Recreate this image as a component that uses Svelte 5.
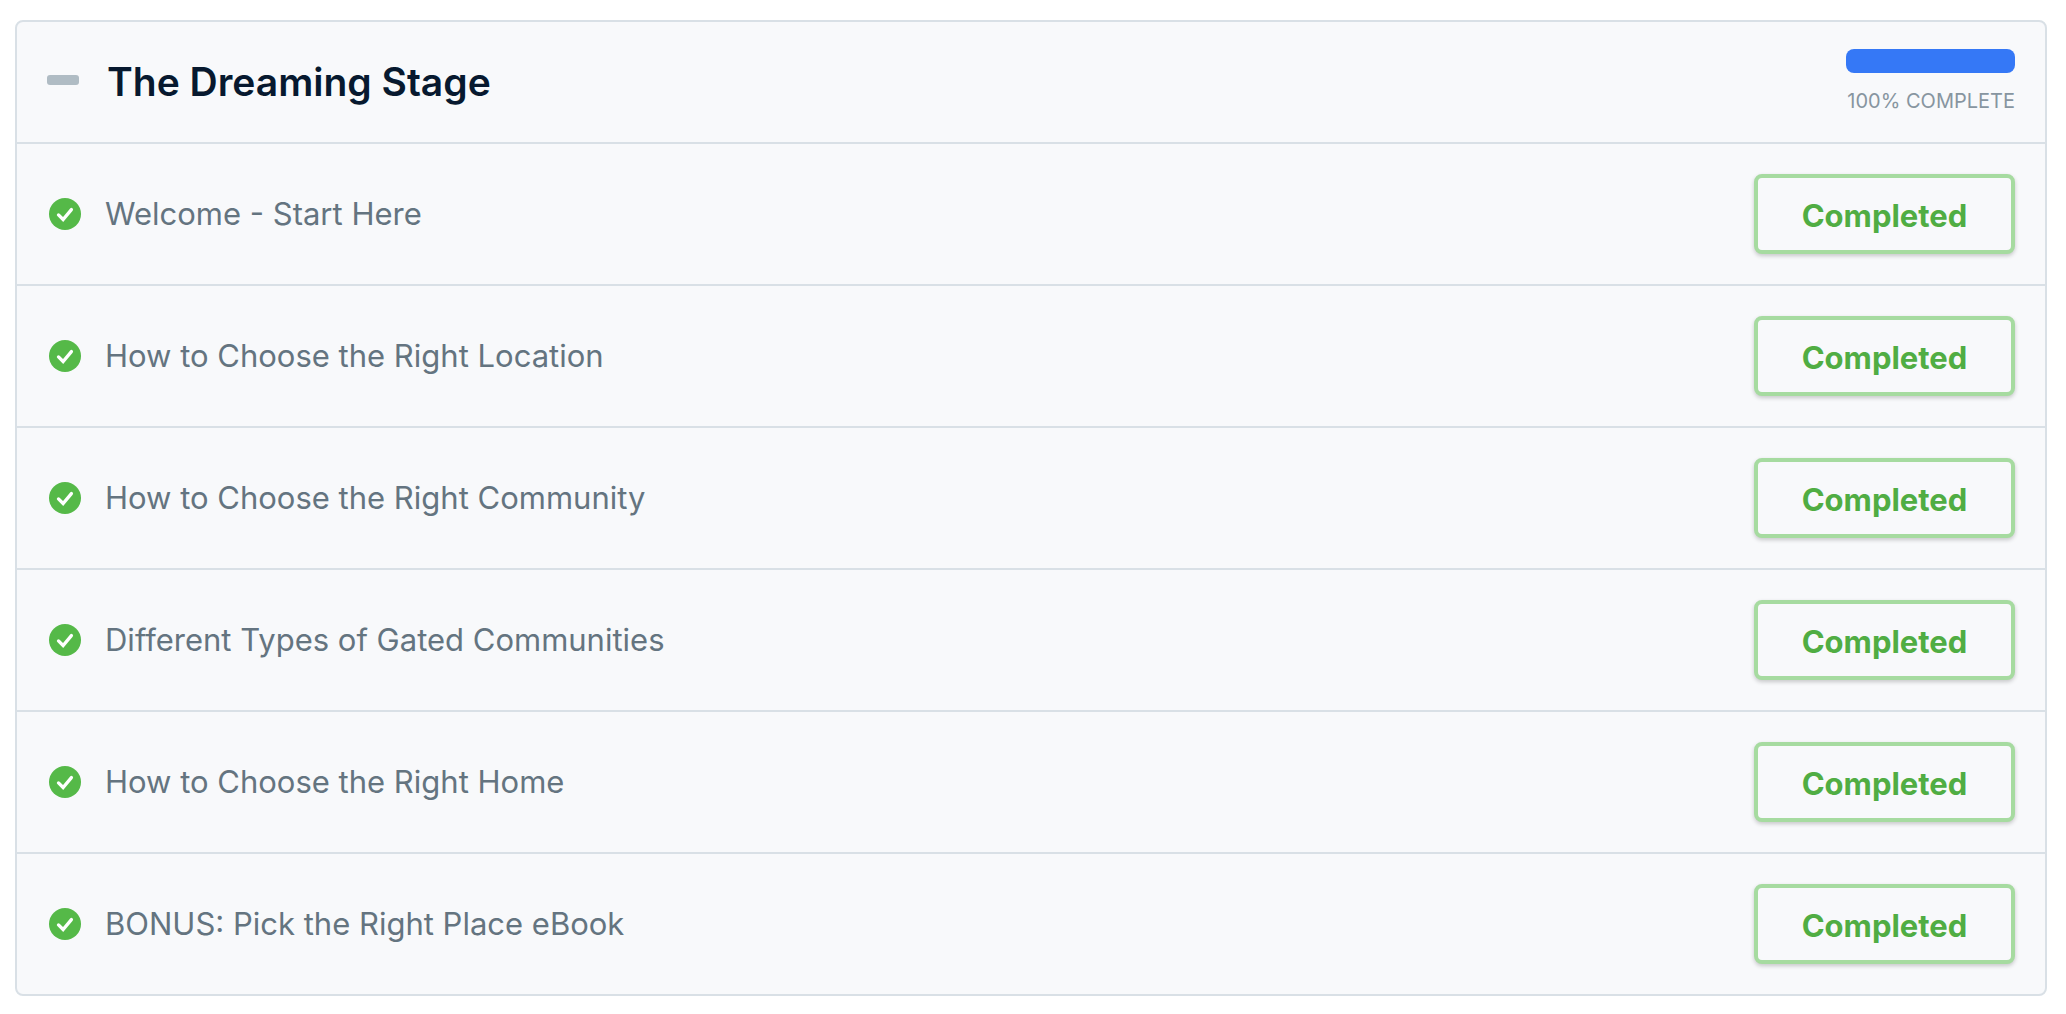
<script lang="ts">
    interface Lesson {
        title: string;
        href: string;
    }

    const lessons: Lesson[] = [
        { title: 'Welcome - Start Here', href: '#welcome' },
        { title: 'How to Choose the Right Location', href: '#location' },
        { title: 'How to Choose the Right Community', href: '#community' },
        { title: 'Different Types of Gated Communities', href: '#types' },
        { title: 'How to Choose the Right Home', href: '#home' },
        { title: 'BONUS: Pick the Right Place eBook', href: '#ebook' }
    ];

    const percent = 100;
    let open = $state(true);
</script>

{#snippet checkIcon()}
    <svg class="check" viewBox="0 0 32 32" aria-hidden="true">
        <circle cx="16" cy="16" r="16" fill="#55b948" />
        <path d="M9.5 16.9 L14.1 21.5 L22.4 11.6" fill="none" stroke="#fff" stroke-width="3.3" stroke-linecap="round" stroke-linejoin="miter" />
    </svg>
{/snippet}

<section class="card">
    <header>
        <button class="toggle" aria-label="Toggle section" aria-expanded={open} onclick={() => (open = !open)}>
            <span class="dash"></span>
        </button>
        <h2>The Dreaming Stage</h2>
        <div class="progress">
            <div class="track">
                <div class="fill" style="width: {percent}%"></div>
            </div>
            <span class="caption">{percent}% COMPLETE</span>
        </div>
    </header>

    {#if open}
        <ul>
            {#each lessons as lesson}
                <li>
                    {@render checkIcon()}
                    <a href={lesson.href}>{lesson.title}</a>
                    <button class="status">Completed</button>
                </li>
            {/each}
        </ul>
    {/if}
</section>

<style>
    :global(body) {
        background: #fff;
        font-family: Inter, "Liberation Sans", sans-serif;
    }

    .card {
        margin: 20px 19px 18px 15px;
        border: 2px solid #d9e0e6;
        border-radius: 8px;
        background: #f8f9fb;
    }

    header {
        display: flex;
        align-items: center;
        height: 120px;
        padding: 0 30px;
    }

    .toggle {
        padding: 6px 0 10px;
        border: 0;
        background: none;
        cursor: pointer;
    }

    .dash {
        display: block;
        width: 32px;
        height: 10px;
        border-radius: 3px;
        background: #b0bcc4;
    }

    h2 {
        flex: 1;
        margin: 0 0 0 28px;
        color: #07192f;
        font-size: 39px;
        font-weight: 600;
        line-height: 48px;
    }

    .progress {
        display: flex;
        flex-direction: column;
        gap: 14px;
        width: 169px;
    }

    .track {
        height: 24px;
        border-radius: 8px;
        overflow: hidden;
        background: #d9e0e6;
    }

    .fill {
        height: 100%;
        background: #3578f6;
    }

    .caption {
        color: #8795a0;
        font-size: 20px;
        line-height: 28px;
        text-align: right;
        white-space: nowrap;
    }

    ul {
        list-style: none;
        margin: 0;
        padding: 0;
    }

    li {
        display: flex;
        align-items: center;
        gap: 24px;
        padding: 30px 30px 30px 32px;
        border-top: 2px solid #d9e0e6;
    }

    .check {
        flex: none;
        width: 32px;
        height: 32px;
    }

    a {
        flex: 1;
        color: #647480;
        font-size: 31px;
        line-height: 40px;
        text-decoration: none;
    }

    .status {
        width: 261px;
        height: 80px;
        padding: 4px 0 0;
        border: 4px solid #a6dba0;
        border-radius: 8px;
        background: #f8f9fb;
        box-shadow: 0 2px 4px rgba(0, 0, 0, 0.2);
        color: #50ad43;
        font-family: inherit;
        font-size: 31px;
        font-weight: 700;
        line-height: 40px;
        cursor: pointer;
    }
</style>
